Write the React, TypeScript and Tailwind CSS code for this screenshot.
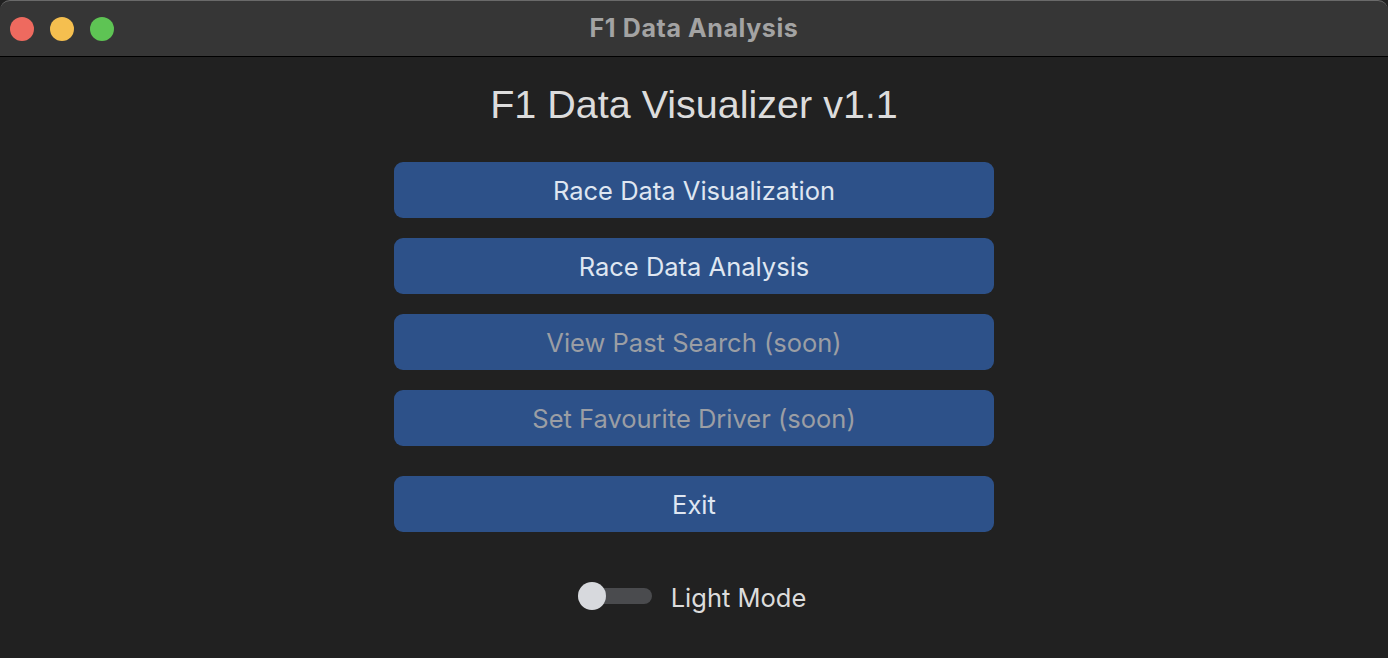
const buttons = [
  { label: 'Race Data Visualization', enabled: true },
  { label: 'Race Data Analysis', enabled: true },
  { label: 'View Past Search (soon)', enabled: false },
  { label: 'Set Favourite Driver (soon)', enabled: false },
];

function MenuButton({ label, enabled }: { label: string; enabled: boolean }) {
  return (
    <button
      className={
        'w-[600px] h-[56px] pt-[3px] rounded-[9px] bg-[#2d5189] text-[25.5px] ' +
        (enabled ? 'text-[#dfe6f1]' : 'text-[#9b9ea4]')
      }
    >
      {label}
    </button>
  );
}

export default function App() {
  return (
    <div className="w-[1388px] h-[658px] bg-[#212121] flex flex-col overflow-hidden font-['Inter',sans-serif]">
      {/* title bar */}
      <div className="h-[57px] shrink-0 bg-[#363636] border-b border-black rounded-t-[10px] border-t border-t-[#6a6a6a] flex items-center relative">
        <div className="flex items-center gap-4 pl-[10px]">
          <span className="w-6 h-6 rounded-full bg-[#ee6a5f]" />
          <span className="w-6 h-6 rounded-full bg-[#f5bf4f]" />
          <span className="w-6 h-6 rounded-full bg-[#5ec454]" />
        </div>
        <div className="absolute inset-0 flex items-center justify-center text-[25px] tracking-[0.6px] font-bold text-[#a3a3a3]">
          F1 Data Analysis
        </div>
      </div>

      {/* content */}
      <div className="flex flex-col items-center">
        <h1 className="mt-[23px] text-[39.5px] leading-[48px] text-[#dcdcdc] font-['Liberation_Sans',sans-serif]">
          F1 Data Visualizer v1.1
        </h1>
        <div className="mt-[34px] flex flex-col gap-5">
          {buttons.map((b) => (
            <MenuButton key={b.label} label={b.label} enabled={b.enabled} />
          ))}
        </div>
        <div className="mt-[30px]">
          <MenuButton label="Exit" enabled />
        </div>
        <div className="mt-[42px] flex items-center gap-[19px] -translate-x-[2px]">
          <div className="relative w-[74px] h-[16px] rounded-full bg-[#4a4b4e]">
            <span className="absolute left-0 top-1/2 -translate-y-1/2 w-[28px] h-[28px] rounded-full bg-[#d7d9dd]" />
          </div>
          <span className="pt-[5px] text-[25.5px] text-[#dcdcdc]">Light Mode</span>
        </div>
      </div>
    </div>
  );
}
